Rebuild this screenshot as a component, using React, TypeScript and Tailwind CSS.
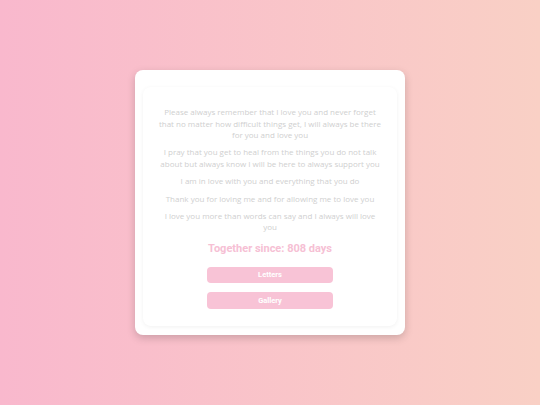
import React from "react";

const messages = [
  "Please always remember that I love you and never forget that no matter how difficult things get, I will always be there for you and love you",
  "I pray that you get to heal from the things you do not talk about but always know I will be here to always support you",
  "I am in love with you and everything that you do",
  "Thank you for loving me and for allowing me to love you",
  "I love you more than words can say and I always will love you",
];

const App = () => {
  return (
    <div className="flex h-[405px] w-[540px] items-center justify-center bg-gradient-to-r from-[#f9b8cd] to-[#f9d0c5]">
      <div className="w-[270px] rounded-lg bg-white px-2 pt-[17px] pb-[9px] shadow-[0_3px_8px_rgba(0,0,0,0.18)]">
        <div className="rounded-lg bg-white px-[15px] pt-[19px] pb-[17px] shadow-[0_1px_4px_rgba(0,0,0,0.06)]">
          <div className="flex flex-col gap-[6px] text-center font-['Open_Sans',sans-serif] text-[8px] leading-[11.4px] text-[#cfcfcf]">
            {messages.map((m) => (
              <p key={m}>{m}</p>
            ))}
          </div>
          <h2 className="mt-[8px] text-center font-['Roboto',sans-serif] text-[11px] leading-[16px] font-bold text-[#f6c0d4]">
            Together since: 808 days
          </h2>
          <div className="mt-[10px] flex flex-col items-center gap-[9px] font-['Roboto',sans-serif]">
            <button className="h-[16px] w-[126px] rounded-sm bg-[#f8c3d6] text-[7.5px] font-bold text-white">
              Letters
            </button>
            <button className="h-[17px] w-[126px] rounded-sm bg-[#f8c3d6] text-[7.5px] font-bold text-white">
              Gallery
            </button>
          </div>
        </div>
      </div>
    </div>
  );
};

export default App;
